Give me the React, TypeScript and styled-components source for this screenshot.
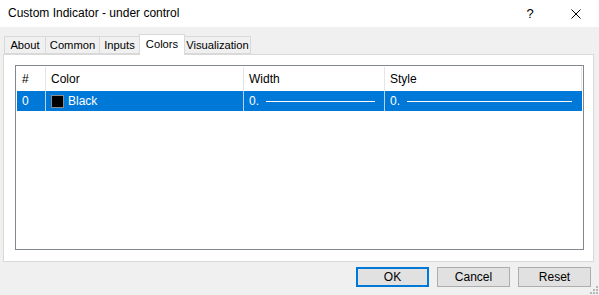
import React from "react";
import styled, { createGlobalStyle } from "styled-components";

const GlobalStyle = createGlobalStyle`
  html, body {
    margin: 0;
    padding: 0;
    background: #f0f0f0;
  }
  body {
    font-family: "Liberation Sans", Arial, sans-serif;
    font-size: 12px;
    color: #000;
  }
`;

const Window = styled.div`
  position: relative;
  width: 599px;
  height: 295px;
  display: flex;
  flex-direction: column;
  background: #f0f0f0;
  overflow: hidden;
`;

const TitleBar = styled.div`
  height: 27px;
  background: #fff;
  display: flex;
  align-items: center;
  padding-left: 8px;
`;

const Title = styled.div`
  flex: 1;
  font-size: 12px;
  padding-bottom: 2px;
`;

const TitleButton = styled.div`
  width: 46px;
  height: 27px;
  display: flex;
  align-items: center;
  justify-content: center;
  font-size: 13px;
`;

const Body = styled.div`
  flex: 1;
  display: flex;
  flex-direction: column;
  padding: 7px 5px 0 3px;
`;

const TabStrip = styled.div`
  display: flex;
  align-items: flex-end;
  padding-left: 2px;
  height: 20px;
`;

const Tab = styled.div<{ $w: number; $active?: boolean }>`
  width: ${(p) => p.$w}px;
  height: ${(p) => (p.$active ? 21 : 18)}px;
  box-sizing: border-box;
  border: 1px solid #d9d9d9;
  border-bottom: ${(p) => (p.$active ? "none" : "1px solid #d9d9d9")};
  margin-left: -1px;
  margin-bottom: ${(p) => (p.$active ? -1 : 0)}px;
  background: ${(p) => (p.$active ? "#fff" : "#f0f0f0")};
  position: relative;
  z-index: ${(p) => (p.$active ? 2 : 1)};
  display: flex;
  align-items: center;
  justify-content: center;
  white-space: nowrap;
  font-size: 11.2px;
  padding-bottom: ${(p) => (p.$active ? 3 : 1)}px;
`;

const Panel = styled.div`
  height: 208px;
  box-sizing: border-box;
  border: 1px solid #d9d9d9;
  background: #fff;
  padding: 10px 9px 11px 11px;
  display: flex;
`;

const ListBox = styled.div`
  flex: 1;
  min-width: 0;
  border: 1px solid #828790;
  padding: 1px 1px 0 1px;
  display: flex;
  flex-direction: column;
`;

const Row = styled.div<{ $selected?: boolean }>`
  display: grid;
  grid-template-columns: 29px 198px 141px 197px;
  height: ${(p) => (p.$selected ? 20 : 24)}px;
  background: ${(p) => (p.$selected ? "#0078d7" : "#fff")};
  color: ${(p) => (p.$selected ? "#fff" : "#000")};
`;

const Cell = styled.div<{ $sep?: string }>`
  display: flex;
  align-items: center;
  gap: 4px;
  padding-left: 5px;
  border-right: 1px solid ${(p) => p.$sep || "#e5e5e5"};
  overflow: hidden;
  white-space: nowrap;
`;

const Swatch = styled.span<{ $color: string }>`
  width: 11px;
  height: 11px;
  background: ${(p) => p.$color};
  border: 1px solid #8c8c8c;
  flex: none;
`;

const LineSample = styled.span`
  flex: 1;
  height: 1px;
  background: #fff;
  margin: 0 9px 0 3px;
`;

const ButtonRow = styled.div`
  display: flex;
  justify-content: flex-end;
  gap: 8px;
  padding: 5px 3px 0 0;
`;

const Button = styled.button<{ $default?: boolean }>`
  width: 73px;
  height: 20px;
  box-sizing: border-box;
  background: #e1e1e1;
  border: ${(p) => (p.$default ? "2px solid #0078d7" : "1px solid #adadad")};
  font-family: inherit;
  font-size: 12px;
  color: #000;
  padding: 0;
  line-height: 1;
`;

const Grip = styled.svg`
  position: absolute;
  right: 1px;
  bottom: 1px;
`;

const columns = ["#", "Color", "Width", "Style"];

export default function App() {
  const tabs = [
    { label: "About", w: 42 },
    { label: "Common", w: 55 },
    { label: "Inputs", w: 41 },
    { label: "Colors", w: 46, active: true },
    { label: "Visualization", w: 67 },
  ];

  return (
    <Window>
      <GlobalStyle />
      <TitleBar>
        <Title>Custom Indicator - under control</Title>
        <TitleButton>?</TitleButton>
        <TitleButton>
          <svg width="10" height="10" viewBox="0 0 10 10">
            <path d="M0.5 0.5 L9.5 9.5 M9.5 0.5 L0.5 9.5" stroke="#000" strokeWidth="1" />
          </svg>
        </TitleButton>
      </TitleBar>
      <Body>
        <TabStrip>
          {tabs.map((t) => (
            <Tab key={t.label} $w={t.w} $active={t.active}>
              {t.label}
            </Tab>
          ))}
        </TabStrip>
        <Panel>
          <ListBox>
            <Row>
              {columns.map((c) => (
                <Cell key={c}>{c}</Cell>
              ))}
            </Row>
            <Row $selected>
              <Cell $sep="#b3d4f2">0</Cell>
              <Cell $sep="#b3d4f2">
                <Swatch $color="#000" />
                Black
              </Cell>
              <Cell $sep="#b3d4f2">
                0.
                <LineSample />
              </Cell>
              <Cell $sep="transparent">
                0.
                <LineSample />
              </Cell>
            </Row>
          </ListBox>
        </Panel>
        <ButtonRow>
          <Button $default>OK</Button>
          <Button>Cancel</Button>
          <Button>Reset</Button>
        </ButtonRow>
      </Body>
      <Grip width="9" height="9" viewBox="0 0 9 9">
        {[
          [7, 1],
          [4, 4],
          [7, 4],
          [1, 7],
          [4, 7],
          [7, 7],
        ].map(([x, y]) => (
          <rect key={`${x}-${y}`} x={x} y={y} width="2" height="2" fill="#b8b8b8" />
        ))}
      </Grip>
    </Window>
  );
}
